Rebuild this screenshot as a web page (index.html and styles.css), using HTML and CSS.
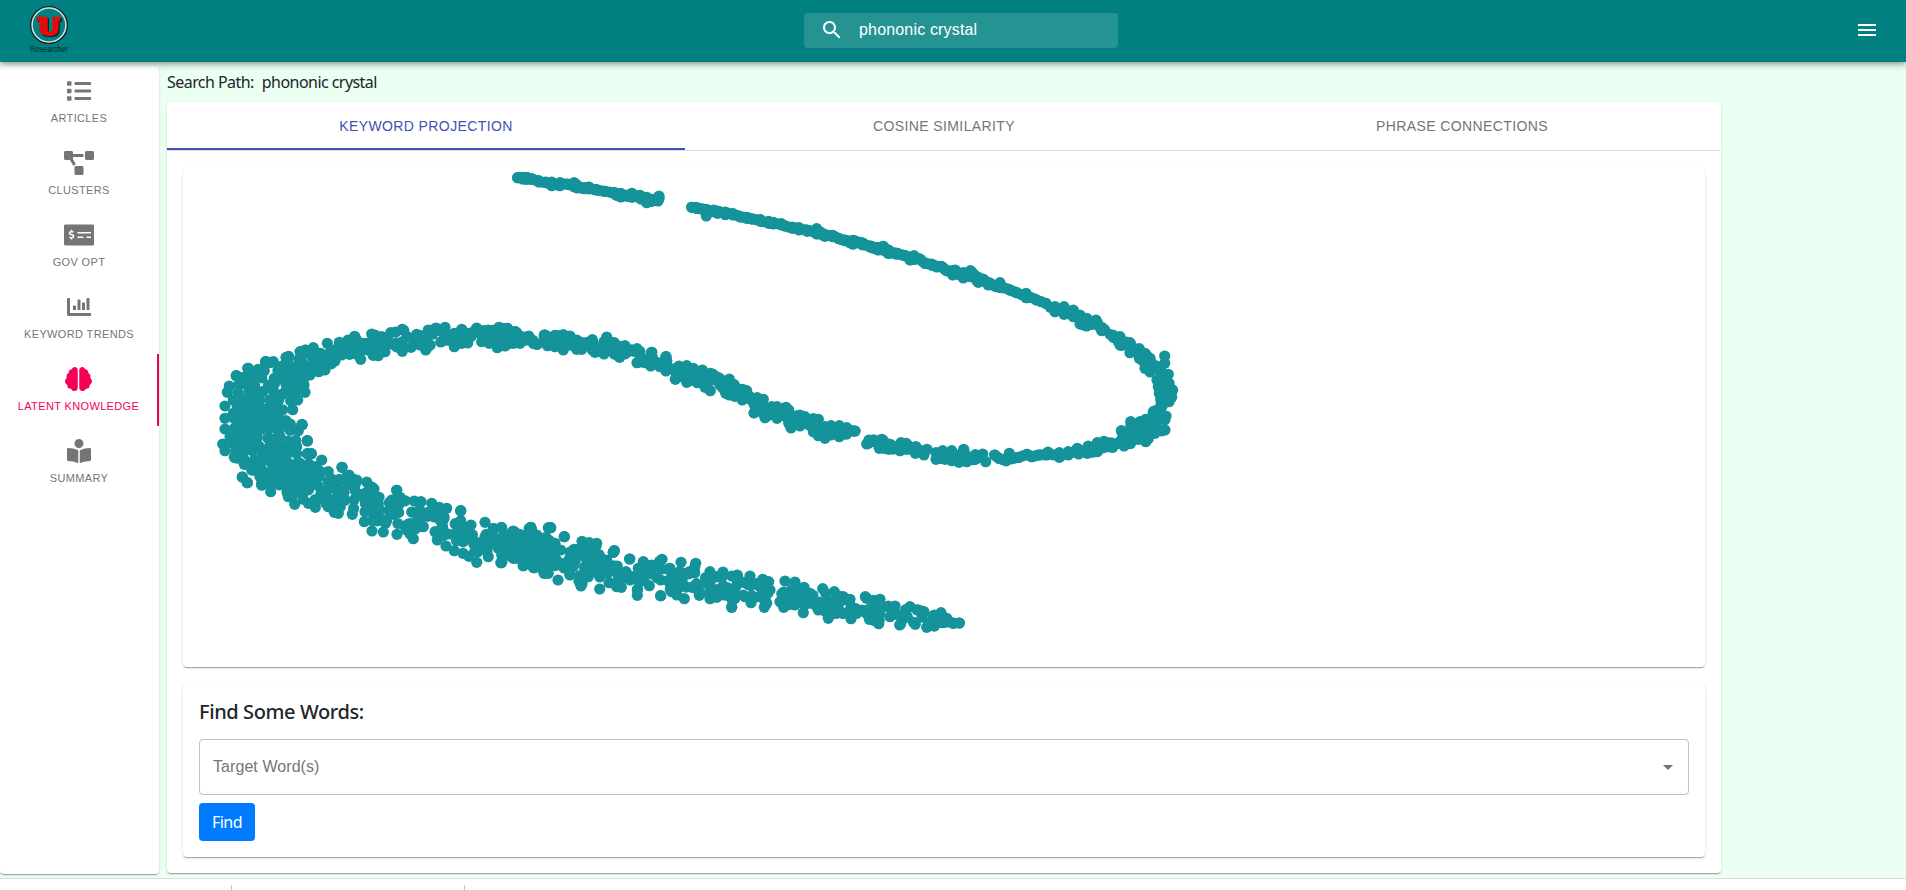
FILE: index.html
```html
<!DOCTYPE html>
<html lang="en">
<head>
<meta charset="utf-8">
<title>Researcher</title>
<link rel="stylesheet" href="styles.css">
</head>
<body>
<div class="app">
  <header class="topbar">
    <svg class="logo" viewBox="0 0 56 58" width="56" height="58">
      <circle cx="25" cy="22" r="18.3" fill="none" stroke="#10272a" stroke-width="1.6"/>
      <circle cx="25" cy="22" r="16.9" fill="none" stroke="#d5dede" stroke-width="1.5"/>
      <path transform="translate(1.3 1.2)" fill="#07282c" d="M12.700 13.700H23.700V26q0 2.700 2.300 2.700t2.400-2.700V13.700h8.300v4H34.500V26q0 7-9.500 7t-9.500-7v-8.300h-2.800z"/>
      <path fill="#e90909" d="M12.700 13.700H23.700V26q0 2.700 2.300 2.700t2.400-2.700V13.700h8.300v4H34.500V26q0 7-9.500 7t-9.500-7v-8.300h-2.800z"/>
      <text class="logo-text" x="6" y="49" textLength="38" lengthAdjust="spacingAndGlyphs">Researcher</text>
    </svg>
    <div class="search">
      <svg viewBox="0 0 24 24" width="24" height="24" fill="currentColor"><path d="M15.500 14h-.79l-.28-.27C15.410 12.590 16 11.110 16 9.500 16 5.910 13.090 3 9.500 3S3 5.910 3 9.500 5.910 16 9.500 16c1.610 0 3.090-.59 4.230-1.570l.27.28v.79l5 4.990L20.490 19l-4.990-5zm-6 0C7.010 14 5 11.990 5 9.500S7.010 5 9.500 5 14 7.010 14 9.500 11.990 14 9.500 14z"/></svg>
      <span>phononic crystal</span>
    </div>
    <svg class="menu" viewBox="0 0 24 24" width="24" height="24" fill="currentColor"><path d="M3 18h18v-2H3v2zm0-5h18v-2H3v2zm0-7v2h18V6H3z"/></svg>
  </header>

  <div class="body">
    <nav class="card sidebar">
      <a class="nav-item"><svg viewBox="0 0 512 512" height="24" width="24" fill="currentColor"><path d="M80 368H16a16 16 0 0 0-16 16v64a16 16 0 0 0 16 16h64a16 16 0 0 0 16-16v-64a16 16 0 0 0-16-16zm0-320H16A16 16 0 0 0 0 64v64a16 16 0 0 0 16 16h64a16 16 0 0 0 16-16V64a16 16 0 0 0-16-16zm0 160H16a16 16 0 0 0-16 16v64a16 16 0 0 0 16 16h64a16 16 0 0 0 16-16v-64a16 16 0 0 0-16-16zm416 176H176a16 16 0 0 0-16 16v32a16 16 0 0 0 16 16h320a16 16 0 0 0 16-16v-32a16 16 0 0 0-16-16zm0-320H176a16 16 0 0 0-16 16v32a16 16 0 0 0 16 16h320a16 16 0 0 0 16-16V80a16 16 0 0 0-16-16zm0 160H176a16 16 0 0 0-16 16v32a16 16 0 0 0 16 16h320a16 16 0 0 0 16-16v-32a16 16 0 0 0-16-16z"/></svg><span>ARTICLES</span></a>
      <a class="nav-item"><svg viewBox="0 0 640 512" height="24" width="30" fill="currentColor"><path d="M384 320H256c-17.670 0-32 14.330-32 32v128c0 17.670 14.330 32 32 32h128c17.670 0 32-14.330 32-32V352c0-17.670-14.330-32-32-32zM192 32c0-17.670-14.330-32-32-32H32C14.330 0 0 14.330 0 32v128c0 17.670 14.330 32 32 32h95.720l73.160 128.040C211.980 300.980 232.400 288 256 288h.28L192 175.510V128h224V64H192V32zM608 0H480c-17.670 0-32 14.330-32 32v128c0 17.670 14.330 32 32 32h128c17.670 0 32-14.330 32-32V32c0-17.670-14.330-32-32-32z"/></svg><span>CLUSTERS</span></a>
      <a class="nav-item"><svg viewBox="0 0 640 512" height="24" width="30" fill="currentColor"><path d="M608 32H32C14.330 32 0 46.330 0 64v384c0 17.670 14.330 32 32 32h576c17.670 0 32-14.330 32-32V64c0-17.670-14.330-32-32-32zM176 327.880V344c0 4.420-3.580 8-8 8h-16c-4.420 0-8-3.580-8-8v-16.290c-11.290-.58-22.270-4.520-31.370-11.350-3.900-2.930-4.100-8.770-.57-12.140l11.750-11.210c2.770-2.640 6.890-2.760 10.130-.73 3.870 2.420 8.260 3.720 12.820 3.720h28.110c6.500 0 11.800-5.920 11.800-13.190 0-5.950-3.610-11.190-8.770-12.730l-45-13.500c-18.590-5.580-31.580-23.420-31.580-43.390 0-24.520 19.050-44.440 42.670-45.070V152c0-4.420 3.580-8 8-8h16c4.420 0 8 3.580 8 8v16.290c11.290.58 22.270 4.510 31.370 11.350 3.900 2.930 4.100 8.770.57 12.140l-11.750 11.210c-2.770 2.640-6.890 2.760-10.130.73-3.870-2.430-8.260-3.720-12.820-3.720h-28.110c-6.500 0-11.800 5.920-11.800 13.190 0 5.950 3.610 11.190 8.770 12.730l45 13.500c18.590 5.580 31.580 23.420 31.580 43.390 0 24.530-19.050 44.440-42.670 45.070zM416 312c0 4.420-3.580 8-8 8H296c-4.420 0-8-3.580-8-8v-16c0-4.420 3.580-8 8-8h112c4.420 0 8 3.580 8 8v16zm160 0c0 4.420-3.580 8-8 8h-80c-4.420 0-8-3.580-8-8v-16c0-4.420 3.580-8 8-8h80c4.420 0 8 3.580 8 8v16zm0-96c0 4.420-3.580 8-8 8H296c-4.420 0-8-3.580-8-8v-16c0-4.420 3.580-8 8-8h272c4.420 0 8 3.580 8 8v16z"/></svg><span>GOV OPT</span></a>
      <a class="nav-item"><svg viewBox="0 0 512 512" height="24" width="24" fill="currentColor"><path d="M332.800 320h38.400c6.400 0 12.800-6.400 12.800-12.800V172.800c0-6.400-6.400-12.800-12.800-12.800h-38.400c-6.400 0-12.800 6.400-12.800 12.800v134.400c0 6.400 6.400 12.800 12.800 12.800zm96 0h38.400c6.400 0 12.800-6.400 12.800-12.800V76.800c0-6.400-6.400-12.800-12.800-12.800h-38.400c-6.400 0-12.800 6.400-12.800 12.800v230.400c0 6.400 6.400 12.800 12.800 12.800zm-288 0h38.400c6.400 0 12.800-6.400 12.800-12.800v-70.400c0-6.400-6.400-12.800-12.800-12.800h-38.400c-6.400 0-12.800 6.400-12.800 12.800v70.400c0 6.400 6.400 12.800 12.800 12.800zm96 0h38.400c6.400 0 12.800-6.400 12.800-12.800V108.800c0-6.400-6.400-12.800-12.800-12.800h-38.400c-6.400 0-12.800 6.400-12.800 12.800v198.400c0 6.400 6.400 12.800 12.800 12.800zM496 384H64V80c0-8.840-7.160-16-16-16H16C7.160 64 0 71.160 0 80v336c0 17.670 14.330 32 32 32h464c8.840 0 16-7.160 16-16v-32c0-8.840-7.160-16-16-16z"/></svg><span>KEYWORD TRENDS</span></a>
      <a class="nav-item active"><svg viewBox="0 0 576 512" height="24" width="27" fill="currentColor"><path d="M208 0c-29.900 0-54.700 20.500-61.800 48.200-.8 0-1.400-.2-2.200-.2-35.300 0-64 28.700-64 64 0 4.800.6 9.500 1.700 14C52.500 138 32 166.600 32 200c0 12.600 3.200 24.300 8.300 34.900C16.300 248.700 0 274.300 0 304c0 33.300 20.400 61.900 49.400 73.900-.9 4.600-1.400 9.300-1.400 14.100 0 39.800 32.200 72 72 72 4.100 0 8.100-.5 12-1.200 9.600 28.500 36.200 49.200 68 49.200 39.800 0 72-32.200 72-72V64c0-35.300-28.700-64-64-64zm368 304c0-29.700-16.300-55.300-40.300-69.100 5.200-10.600 8.300-22.300 8.300-34.900 0-33.400-20.500-62-49.700-74 1-4.500 1.700-9.200 1.700-14 0-35.300-28.700-64-64-64-.8 0-1.500.2-2.200.2C422.700 20.500 397.900 0 368 0c-35.300 0-64 28.600-64 64v376c0 39.800 32.200 72 72 72 31.800 0 58.400-20.700 68-49.200 3.900.7 7.900 1.200 12 1.200 39.800 0 72-32.200 72-72 0-4.800-.5-9.500-1.400-14.100 29-12 49.400-40.600 49.400-73.900z"/></svg><span>LATENT KNOWLEDGE</span></a>
      <a class="nav-item"><svg viewBox="0 0 512 512" height="24" width="24" fill="currentColor"><path d="M352 96c0-53.020-42.980-96-96-96s-96 42.980-96 96 42.980 96 96 96 96-42.980 96-96zM233.590 241.100c-59.330-36.320-155.430-46.300-203.790-49.050C13.550 191.130 0 203.510 0 219.140v222.800c0 14.330 11.590 26.280 26.490 27.050 43.660 2.290 131.990 10.680 193.040 41.430 9.370 4.720 20.480-1.710 20.480-11.870V252.560c-.01-4.670-2.320-8.950-6.420-11.460zm248.610-49.050c-48.350 2.740-144.460 12.730-203.780 49.050-4.100 2.510-6.410 6.960-6.410 11.630v245.790c0 10.190 11.140 16.630 20.540 11.900 61.040-30.720 149.320-39.110 192.970-41.400 14.900-.78 26.490-12.730 26.490-27.060V219.140c-.01-15.630-13.560-28.010-29.810-27.090z"/></svg><span>SUMMARY</span></a>
    </nav>

    <main class="main">
      <div class="path"><span>Search Path:</span><span class="path-term">phononic crystal</span></div>
      <section class="card panel">
        <div class="tabs">
          <div class="tab selected">KEYWORD PROJECTION</div>
          <div class="tab">COSINE SIMILARITY</div>
          <div class="tab">PHRASE CONNECTIONS</div>
        </div>
        <div class="panel-body">
          <div class="card chart"><svg id="scatter" viewBox="0 0 1522 500" width="1522" height="500"></svg></div>
          <div class="card finder">
            <h5>Find Some Words:</h5>
            <div class="select"><span>Target Word(s)</span><svg viewBox="0 0 24 24" width="24" height="24" fill="currentColor"><path d="M7 10l5 5 5-5z"/></svg></div>
            <button class="find">Find</button>
          </div>
        </div>
      </section>
    </main>
  </div>

  <footer class="strip"><i></i><i></i></footer>
</div>
<script src="scatter.js"></script>
</body>
</html>
```
FILE: styles.css
```css
* { box-sizing: border-box; }
body { margin: 0; font-family: "Noto Sans", "Open Sans", sans-serif; color: #212529; overflow: hidden; }
.app { width: 1906px; height: 890px; display: flex; flex-direction: column; background: #ebfff3; }

.topbar { height: 62px; flex: none; background: #008080; color: #fff; display: grid; grid-template-columns: 804px 314px 1fr; position: relative; z-index: 2;
  box-shadow: 0 2px 4px -1px rgba(0,0,0,.2), 0 4px 5px 0 rgba(0,0,0,.14), 0 1px 10px 0 rgba(0,0,0,.12); }
.logo { margin: 3px 0 0 24px; overflow: visible; }
.logo-text { font: 9px "Liberation Sans", Arial, sans-serif; fill: #04292b; }
.search { margin-top: 13px; height: 35px; border-radius: 4px; background: rgba(255,255,255,.15); display: flex; align-items: center; padding: 0 16px; gap: 15px;
  font: 16px/19px "Liberation Sans", Arial, sans-serif; letter-spacing: .17px; }
.search svg { margin-top: -1px; }
.search span { margin-top: -3px; }
.menu { justify-self: end; margin: 18px 27px 0 0; }

.card { background: #fff; border-radius: 4px; box-shadow: 0 2px 1px -1px rgba(0,0,0,.2), 0 1px 1px 0 rgba(0,0,0,.14), 0 1px 3px 0 rgba(0,0,0,.12); }
.body { height: 816px; flex: none; display: flex; gap: 8px; align-items: flex-start; padding-top: 4px; }
.sidebar { width: 159px; height: 808px; }
.nav-item { height: 72px; display: flex; flex-direction: column; align-items: center; padding: 13px 1px 0 0; color: #757575;
  font: 11px/18px "Liberation Sans", Arial, sans-serif; letter-spacing: .36px; }
.nav-item svg { display: block; margin: 0 1px 6px 0; }
.nav-item.active { color: #f50057; border-right: 2px solid #f50057; padding-right: 0; }

.main { width: 1554px; }
.path { height: 36px; display: flex; gap: 8px; font-size: 16px; line-height: 33px; letter-spacing: -.55px; }
.panel { height: 771px; }
.tabs { height: 49px; display: grid; grid-template-columns: repeat(3, 1fr); border-bottom: 1px solid #dee0e2; }
.tab { height: 48px; display: flex; align-items: center; justify-content: center; font: 14px "Liberation Sans", Arial, sans-serif; letter-spacing: .4px; color: #757575; }
.tab.selected { color: #3f51b5; border-bottom: 2px solid #3f51b5; padding-top: 2px; }
.panel-body { padding: 16px; display: flex; flex-direction: column; gap: 16px; }
.chart { height: 500px; }
.chart svg { display: block; fill: #14939a; }
.finder { height: 174px; padding: 17px 16px 16px; }
.finder h5 { margin: 0 0 15px; font-size: 20px; line-height: 24px; font-weight: 500; letter-spacing: -.4px; }
.select { height: 56px; border: 1px solid #c0c0c0; border-radius: 4px; display: flex; align-items: center; justify-content: space-between; padding: 0 8px 0 13px;
  font: 16px "Liberation Sans", Arial, sans-serif; color: #757575; margin-bottom: 8px; letter-spacing: .07px; }
.find { display: block; width: 56px; height: 38px; border: 0; border-radius: 4px; padding: 0; background: #007bff; color: #fff; font: 16px/24px "Noto Sans", sans-serif; letter-spacing: -.5px; }

.strip { flex: 1; border-top: 1px solid #dadce0; background: #fff; display: flex; padding: 6px 0 0 231px; gap: 232px; }
.strip i { width: 1px; background: #c4c6ca; }
```
FILE: scatter.js
```js
// Cross-sections of each cloud, in thirds of a pixel from the band's origin.
// [x, y] single point, [x, top, bottom] vertical section, [x1, y1, x2, y2] free section.
const bands = [
  { o: [500, 150], s: [[53,83],[68,82,87],[80,82,88],[95,86,88],[116,92,96],[138,96,98],[155,96,107],[180,98,107],[203,102,103],[222,98,110],[231,105,114],[253,113,116],[267,111,117],[290,119,120],[315,124],[342,127,130],[350,130,136],[362,130,141],[382,136,139],[396,130,142],[420,136,145],[440,142,158],[455,148,154],[474,150,153],[477,138,145]] },
  { o: [500, 150], s: [[575,172],[588,172,175],[600,176],[619,178,198],[641,180,185],[653,183,190],[676,186,194],[699,191,195],[720,199,201],[740,202,205],[758,207],[781,209,214],[806,214,220],[820,217,222],[844,221,224],[856,228],[877,231,235],[897,233,240],[922,240,244],[950,236,252],[975,254,259],[998,256,260],[1017,266],[1035,270,272],[1058,272,282],[1088,279,284],[1110,290],[1133,292,299],[1150,289,295],[1165,300,310],[1190,310,312]] },
  { o: [850, 200], s: [[0,125,128],[10,121,132],[38,129,134],[65,139,143],[85,143,150],[99,139,150],[115,150,160],[142,160,162],[165,167],[180,172,180],[192,167,178],[210,178],[225,190],[245,192,195],[260,198,201],[275,200],[290,212],[308,212,225],[316,210,222],[340,218,234],[361,212,230],[385,232,247],[400,238],[415,247,255],[440,257,260],[450,248,262],[480,270],[500,278],[528,280,293],[560,300],[587,310],[615,320,335],[642,320,343],[670,330,350],[690,345,372],[710,355,378],[738,360,372],[755,382,392],[790,406,412],[810,410,435],[840,428,458],[868,446,475],[885,460,505],[900,475,516],[922,500,930,510],[921,540,955,523],[925,560,957,550],[928,580,968,571],[932,600,965,592],[935,620,957,605],[910,635,948,648],[887,658,945,690],[870,665,915,700],[865,670,887,725],[850,680,865,718],[814,692,842,730],[822,712,822,738],[805,730,788,742],[762,724,788,740],[742,728,742,755],[715,738,712,760],[682,745,686,762],[655,755,655,765],[628,758,628,772],[594,756,590,765],[565,765],[545,770],[531,763],[507,772],[478,760,490,775],[468,782],[447,775],[434,765]] },
  { o: [850, 200], s: [[407,785,398,762],[376,764,376,778],[350,770,350,785],[341,748,341,770],[327,770,327,787],[305,752,305,782],[278,752,285,778],[258,758,258,778]] },
  { o: [850, 200], s: [[231,748,222,765],[198,740,196,760],[168,730,172,748],[153,728,150,752],[117,732,116,748],[95,718,88,745],[57,720,50,732]] },
  { o: [850, 200], solo: true, s: [[944,468,944,490],[842,665,842,680]] },
  { o: [500, 150], s: [[5,535,585],[22,535,583],[46,545,578],[70,563,572],[86,558,570],[100,572,580],[111,583]] },
  { o: [500, 150], s: [[133,555,560],[143,560,587],[165,556,590],[190,554,600],[210,558,585],[230,570,598],[245,578,598],[262,577,585],[277,569,600],[285,590,607],[312,575,612],[320,561,600],[343,578,612],[359,590,622],[375,587,612],[395,600],[411,596,638],[420,605,636],[435,630,638],[452,630,648],[480,640,650],[498,640,663]] },
  { o: [500, 150], s: [[526,655,688],[537,648,680],[560,647,697],[580,655,690],[592,665,698],[607,660,690],[615,675,712],[631,670,722],[638,672,690],[660,686,705],[677,700,730],[688,687,735],[703,705,738],[727,718,750],[740,722,740],[755,750],[772,743,775],[762,760,789],[790,748,785],[795,780,803],[815,770,790],[831,770,805],[858,772,795],[866,780,820],[873,800,834],[900,795,828],[915,800,815],[940,806,845],[955,808,857],[975,830,865],[993,827,855],[1018,827,860],[1040,833,852],[1065,843]] },
  { o: [200, 300], s: [[965,110,960,130],[945,95,940,130],[920,85,915,138],[897,82,892,143],[865,90,868,130],[830,84,845,125],[803,100,803,129],[785,88,785,130],[763,100,763,140],[735,82,735,118],[708,84,722,126],[685,90,677,150],[650,103,660,135],[607,88,607,154],[572,98,590,140],[545,110,555,155],[515,102,535,167],[490,130,482,178],[464,109,449,163],[418,127,425,165],[382,130,405,183],[360,160,375,210],[340,143,356,215],[315,150,330,225],[300,155,315,230],[258,172,290,220]] },
  { o: [200, 300], density: 2600, s: [[197,185,258,190],[144,205,280,215],[130,232,300,238],[88,258,312,254],[82,277,315,277],[100,300,293,300],[75,318,278,329],[100,340,235,340],[75,355,258,362],[115,376,306,374],[75,387,295,392],[90,410,322,423],[68,432,290,440],[75,452,290,462],[103,472,295,488],[133,493,325,493],[155,510,310,515],[180,530,340,530],[185,555,330,550]] },
  { o: [200, 300], density: 1000, s: [[185,480,185,555],[220,475,212,575],[255,500,265,590],[290,520,284,613],[327,492,325,610],[365,480,346,622],[385,515,385,620],[418,538,403,637],[447,525,415,640],[470,540,457,643],[500,546,493,665],[522,567,516,693],[537,592,540,655],[575,600,550,696],[600,592,591,703],[643,603,620,690],[663,605,640,716],[695,610,670,680],[718,622,705,695],[740,625,712,720],[720,660,738,738],[782,662,763,752],[790,680,789,760],[813,675,830,787],[855,667,865,770],[880,685,895,745],[904,682,930,765],[940,695,950,775],[965,705,970,797],[992,682,1002,803],[1010,705,1035,820],[1045,683,1045,780]] },
  { o: [500, 480], density: 700, s: [[5,143,5,225],[40,153,40,235],[92,142,70,257],[105,172,90,245],[138,172,101,263],[165,190,132,280],[182,210,145,280],[222,208,174,300],[246,184,210,285],[268,188,243,318],[290,190,265,290],[300,230,299,327],[320,240,327,308],[352,258,350,320],[378,275,364,322],[400,290,390,300],[415,265,412,346],[430,245,412,330],[455,255,448,317],[486,238,482,300],[510,265,515,335],[543,247,530,345],[548,280,553,356],[587,250,580,320],[580,275,598,346],[630,275,630,356],[650,290,650,352],[669,276,670,345],[712,285,705,355],[712,300,730,345],[750,288,735,350],[760,310,753,368],[788,298,780,350],[806,305,793,382],[810,330,800,370]] },
  { o: [500, 480], density: 480, s: [[855,303,840,365],[885,306,851,382],[912,322,885,375],[930,340,910,398],[968,326,955,390],[1003,335,985,415],[1030,350,1028,400],[1050,358,1053,416],[1065,385,1070,400],[1096,350,1085,390],[1100,355,1108,418],[1140,358,1136,431],[1165,378,1170,410],[1185,378,1199,435],[1230,380,1222,410],[1255,390,1246,433],[1272,395,1280,442],[1303,405,1303,438],[1323,398,1330,428],[1340,415,1340,426],[1360,430],[1378,429]] },
  // stray points
  { o: [200, 300], solo: true, s: [[1035,105],[1042,135],[109,227],[144,205],[197,185],[212,187],[127,531],[142,548],[322,461],[334,461],[426,502],[590,571],[580,602],[782,632],[903,788],[322,422],[306,374]] },
  { o: [500, 480], solo: true, s: [[152,143],[193,170],[343,212],[340,217],[389,237],[482,347],[695,382],[697,360],[5,247]] },
  { o: [500, 150], solo: true, s: [[455,607],[456,620],[498,620],[500,632]] }
];

let seed = 7;
const rand = () => (seed = (seed * 16807) % 2147483647) / 2147483647;
const lerp = (a, b, t) => a + (b - a) * t;
const section = p => p.length === 2 ? [p[0], p[1], p[0], p[1]] : p.length === 3 ? [p[0], p[1], p[0], p[2]] : p;

const dots = [];
for (const band of bands) {
  const put = (x, y) => dots.push([band.o[0] - 183 + x / 3, band.o[1] - 167 + y / 3]);
  const list = band.s.map(section);
  list.forEach((a, i) => {
    put(a[0], a[1]);
    put(a[2], a[3]);
    if (band.solo) return;
    const len = Math.hypot(a[2] - a[0], a[3] - a[1]);
    const n = Math.floor(len / 26);
    for (let k = 1; k < n; k++) {
      const t = (k + (rand() - .5) * .6) / n;
      put(lerp(a[0], a[2], t), lerp(a[1], a[3], t) + (rand() - .5) * 8);
    }
    const b = list[i + 1];
    if (!b) return;
    const gap = Math.hypot((b[0] + b[2] - a[0] - a[2]) / 2, (b[1] + b[3] - a[1] - a[3]) / 2);
    const fill = band.density ? Math.round(len * gap / band.density) : 1 + Math.ceil(len * gap / 420);
    for (let k = 0; k < fill; k++) {
      const u = band.density ? rand() : (k + .5) / fill, t = rand();
      put(lerp(lerp(a[0], b[0], u), lerp(a[2], b[2], u), t), lerp(lerp(a[1], b[1], u), lerp(a[3], b[3], u), t));
    }
  });
}
document.getElementById('scatter').innerHTML =
  dots.map(d => `<circle cx="${d[0].toFixed(1)}" cy="${d[1].toFixed(1)}" r="5.6"/>`).join('');
```
